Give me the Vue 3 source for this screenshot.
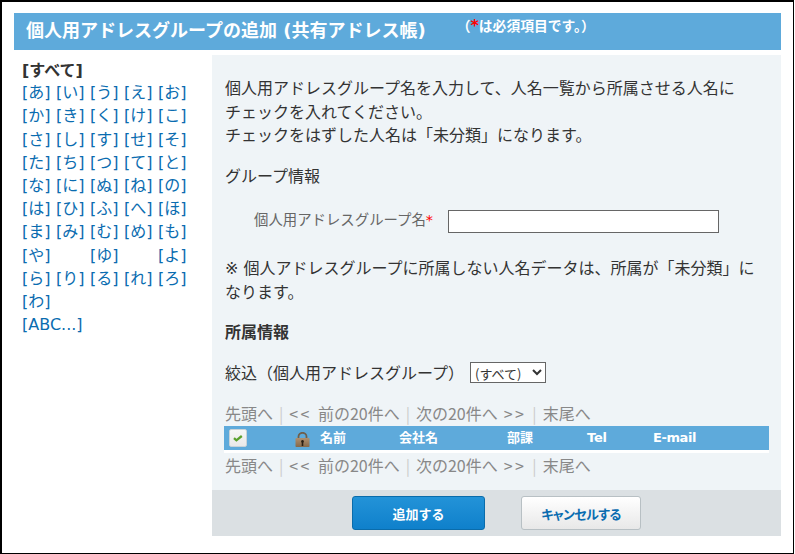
<script setup>
const kana = ['あ','い','う','え','お','か','き','く','け','こ','さ','し','す','せ','そ','た','ち','つ','て','と','な','に','ぬ','ね','の','は','ひ','ふ','へ','ほ','ま','み','む','め','も','や','','ゆ','','よ','ら','り','る','れ','ろ','わ']
</script>

<template>
  <div class="frame">
    <header class="title">
      <h1>個人用アドレスグループの追加 (共有アドレス帳)</h1>
      <span class="note">（<b class="star big">*</b>は必須項目です。）</span>
    </header>
    <div class="body">
      <aside class="side">
        <strong class="all">[すべて]</strong>
        <div class="kana">
          <template v-for="(k, i) in kana" :key="i">
            <a v-if="k">[{{ k }}]</a>
            <span v-else></span>
          </template>
        </div>
        <a class="abc">[ABC...]</a>
      </aside>
      <main class="main">
        <div class="content">
          <p class="intro">個人用アドレスグループ名を入力して、人名一覧から所属させる人名に<br>チェックを入れてください。<br>チェックをはずした人名は「未分類」になります。</p>
          <p class="group">グループ情報</p>
          <div class="field">
            <label>個人用アドレスグループ名<i class="star">*</i></label>
            <input type="text" />
          </div>
          <p class="warn">※ 個人アドレスグループに所属しない人名データは、所属が「未分類」になります。</p>
          <p class="belong">所属情報</p>
          <div class="filter">
            <span>絞込（個人用アドレスグループ）</span>
            <select><option>(すべて)</option></select>
          </div>
          <nav class="pager top">
            <span>先頭へ</span><span class="sep">|</span>
            <span><span class="arrow">&lt;&lt; </span>前の20件へ</span><span class="sep">|</span>
            <span>次の20件へ<span class="arrow"> &gt;&gt;</span></span><span class="sep">|</span>
            <span>末尾へ</span>
          </nav>
          <div class="thead">
            <span class="check">
              <svg width="10" height="8" viewBox="0 0 10 8"><path d="M1 4.200 3.400 6.300 8.800 2" fill="none" stroke="#5aa02c" stroke-width="2.300"/></svg>
            </span>
            <svg class="lock" width="15" height="15" viewBox="0 0 15 15">
              <defs>
                <linearGradient id="lockBody" x1="0" y1="0" x2="0" y2="1">
                  <stop offset="0" stop-color="#b09070"/>
                  <stop offset="1" stop-color="#85684a"/>
                </linearGradient>
              </defs>
              <path d="M3.500 7V4.500a4 3.700 0 0 1 8 0V7" fill="none" stroke="#6f5f4c" stroke-width="1.800"/>
              <rect x="0.500" y="6" width="14" height="9" rx="0.800" fill="url(#lockBody)"/>
              <path d="M7.500 8a1.500 1.500 0 0 1 .8 2.700V14H6.700v-3.300A1.500 1.500 0 0 1 7.500 8z" fill="#2a1f15"/>
            </svg>
            <span class="c-name">名前</span>
            <span class="c-co">会社名</span>
            <span class="c-dep">部課</span>
            <span class="c-tel">Tel</span>
            <span class="c-mail">E-mail</span>
          </div>
          <nav class="pager bottom">
            <span>先頭へ</span><span class="sep">|</span>
            <span><span class="arrow">&lt;&lt; </span>前の20件へ</span><span class="sep">|</span>
            <span>次の20件へ<span class="arrow"> &gt;&gt;</span></span><span class="sep">|</span>
            <span>末尾へ</span>
          </nav>
        </div>
        <footer class="foot">
          <button class="btn primary">追加する</button>
          <button class="btn cancel">キャンセルする</button>
        </footer>
      </main>
    </div>
  </div>
</template>

<style>
html, body { margin: 0; background: #fff; }
</style>

<style scoped>
.frame {
  width: 794px;
  height: 554px;
  box-sizing: border-box;
  border: 2px solid #000;
  border-width: 2px 1px 1px 2px;
  padding: 11px 12px 0 12px;
  font-family: "DejaVu Sans", "Noto Sans CJK JP", sans-serif;
  font-size: 16px;
  color: #333;
  background: #fff;
  overflow: hidden;
}
.title {
  height: 37px;
  background: #5eaadb;
  color: #fff;
  display: flex;
  padding-left: 12px;
  box-sizing: border-box;
}
.title h1 {
  margin: 0;
  font-size: 18px;
  font-weight: 700;
  line-height: 35px;
  white-space: nowrap;
}
.note {
  font-size: 13.800px;
  font-weight: 700;
  line-height: 27px;
  margin-left: 31px;
  white-space: nowrap;
}
.star { color: #f00; font-style: normal; }
.big { font-size: 16px; line-height: 0; }
.body {
  display: flex;
  margin-top: 5px;
  height: 481px;
}
.side {
  width: 198px;
  padding: 3px 0 0 8px;
  box-sizing: border-box;
  flex: none;
  line-height: 23.200px;
}
.all { display: block; position: relative; top: 1px; }
.kana {
  display: grid;
  grid-template-columns: repeat(5, 34px);
  grid-auto-rows: 23.200px;
}
.kana a, .abc { color: #0a6cb0; white-space: nowrap; }
.abc { display: block; }
.main {
  flex: 1;
  background: #eff4f7;
  display: flex;
  flex-direction: column;
}
.content {
  flex: 1;
  padding: 0 12px 0 13px;
}
p { margin: 0; line-height: 23.500px; }
.intro { margin-top: 22px; }
.group { margin-top: 17px; }
.field {
  display: flex;
  align-items: center;
  margin-top: 22px;
  padding-left: 29px;
}
.field label {
  font-size: 14.400px;
  color: #666;
  width: 194px;
  white-space: nowrap;
  line-height: 20px;
  padding-bottom: 3px;
}
.field input {
  width: 271px;
  height: 23px;
  box-sizing: border-box;
  border: 1px solid #666;
  background: #fff;
  margin: 0;
  padding: 0;
}
.warn { margin-top: 24px; }
.belong { margin-top: 17px; font-weight: 700; }
.filter {
  display: flex;
  align-items: center;
  margin-top: 16px;
  height: 23px;
}
.filter select {
  margin-left: 6px;
  width: 76px;
  height: 21px;
  font-family: "Noto Sans CJK JP", sans-serif;
  font-size: 13px;
  color: #333;
  background: #fff;
  border: 1px solid #666;
  border-radius: 0;
  padding: 0;
}
.pager {
  font-family: "Noto Sans CJK JP", sans-serif;
  color: #888;
  display: flex;
  gap: 6px;
  line-height: 23px;
  white-space: pre;
}
.pager.top { margin-top: 18px; }
.pager.bottom { margin-top: 1px; }
.arrow { letter-spacing: 2.400px; }
.sep { color: #ccc; }
.thead {
  height: 24px;
  background: #5eaadb;
  border-bottom: 3px solid #fff;
  color: #fff;
  font-size: 13px;
  font-weight: 700;
  position: relative;
  margin: 1px 0 0 -1px;
  box-sizing: content-box;
}
.thead > * { position: absolute; top: 3px; white-space: nowrap; line-height: 17px; }
.check {
  left: 5px;
  top: 3px;
  width: 18px;
  height: 18px;
  box-sizing: border-box;
  background: linear-gradient(#f7f7f7, #e9e9e9);
  border: 1px solid #c9d3d8;
  border-radius: 2px;
  display: flex;
  align-items: center;
  justify-content: center;
}
.lock { left: 71px; top: 6px; }
.c-name { left: 96px; }
.c-co { left: 175px; }
.c-dep { left: 283px; }
.c-tel { left: 363px; letter-spacing: -0.200px; }
.c-mail { left: 429px; letter-spacing: -0.400px; }
.foot {
  height: 46px;
  background: #dbe0e3;
  display: flex;
  gap: 36px;
  padding: 6px 0 0 140px;
  box-sizing: border-box;
  flex: none;
}
.btn {
  height: 34px;
  border-radius: 3px;
  font-family: "Noto Sans CJK JP", sans-serif;
  font-size: 13px;
  font-weight: 700;
  padding: 0;
  cursor: pointer;
}
.primary {
  width: 133px;
  color: #fff;
  background: linear-gradient(#2393d8, #0f80cb);
  border: 1px solid #0a6cab;
}
.cancel {
  width: 120px;
  color: #0a6cb0;
  font-feature-settings: "palt";
  letter-spacing: -0.600px;
  background: linear-gradient(#fff, #e8e8e8);
  border: 1px solid #b8c0c4;
}
</style>
